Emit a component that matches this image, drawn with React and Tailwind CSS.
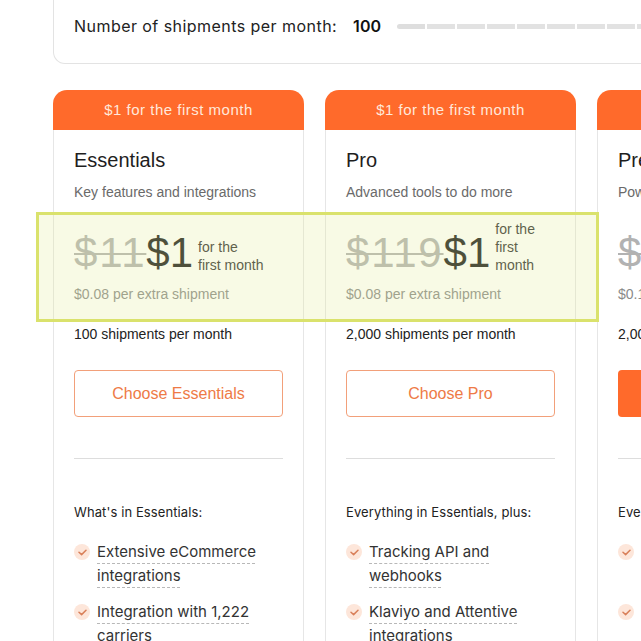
import React from 'react';

const plans = [
  {
    name: 'Essentials',
    tagline: 'Key features and integrations',
    oldPrice: '$11',
    extra: '$0.08 per extra shipment',
    volume: '100 shipments per month',
    cta: 'Choose Essentials',
    filled: false,
    intro: "What's in Essentials:",
    features: [
      ['Extensive eCommerce', 'integrations'],
      ['Integration with 1,222', 'carriers'],
    ],
  },
  {
    name: 'Pro',
    tagline: 'Advanced tools to do more',
    oldPrice: '$119',
    extra: '$0.08 per extra shipment',
    volume: '2,000 shipments per month',
    cta: 'Choose Pro',
    filled: false,
    intro: 'Everything in Essentials, plus:',
    features: [
      ['Tracking API and', 'webhooks'],
      ['Klaviyo and Attentive', 'integrations'],
    ],
  },
  {
    name: 'Premium',
    tagline: 'Powerful features for scale',
    oldPrice: '$349',
    extra: '$0.10 per extra shipment',
    volume: '2,000 shipments per month',
    cta: 'Choose Premium',
    filled: true,
    intro: 'Everything in Pro, plus:',
    features: [
      ['Custom shipping', 'rules'],
      ['Dedicated account', 'manager'],
      ['Priority support', 'line'],
    ],
  },
];

const sans = { fontFamily: '"Liberation Sans", Arial, sans-serif' };
const geo = { fontFamily: 'Inter, "Noto Sans", sans-serif' };

const Check = () => (
  <span className="w-4 h-4 rounded-full bg-[#fde6da] flex items-center justify-center shrink-0 mt-[4px]">
    <svg width="9" height="7" viewBox="0 0 9 7" fill="none">
      <path d="M1 3.2 L3.6 5.6 L8 1.2" stroke="#d9805a" strokeWidth="1.5" strokeLinecap="round" strokeLinejoin="round" />
    </svg>
  </span>
);

const PlanCard = ({ plan }) => (
  <div className="w-[251px] shrink-0">
    <div
      className="h-[40px] rounded-t-[14px] bg-[#ff6a2b] flex items-center justify-center text-[15px] tracking-[0.5px] text-[#ffe8da]"
      style={sans}
    >
      $1 for the first month
    </div>
    <div className="border-x border-[#e6e6e6] px-[20px] pt-[18px] pb-10">
      <div className="text-[20px] leading-6 text-[#1e1e1e]" style={sans}>{plan.name}</div>
      <div className="mt-[11px] text-[14px] leading-[18px] text-[#6a6a6a]" style={sans}>{plan.tagline}</div>

      {/* price row keeps a fixed height; a taller note grows upward */}
      <div className="mt-[31px] h-[42px] flex items-end" style={sans}>
        <span className="text-[42px] leading-none text-[#b2b2b2] line-through decoration-2 tracking-[1.8px] whitespace-nowrap">
          {plan.oldPrice}
        </span>
        <span className="text-[42px] leading-none text-[#1c1c1c] whitespace-nowrap">$1</span>
        <span className="ml-[5px] flex-1 min-w-0 text-[14px] leading-[18px] text-[#333]">
          for the
          <br />
          first month
        </span>
      </div>
      <div className="mt-[11px] text-[14px] leading-[18px] text-[#8a8a8a]" style={sans}>{plan.extra}</div>
      <div className="mt-[22px] text-[14px] leading-[18px] text-[#222]" style={sans}>{plan.volume}</div>

      <button
        className={
          plan.filled
            ? 'mt-[27px] w-full h-[47px] rounded-[4px] bg-[#ff6a2b] text-white text-[16px]'
            : 'mt-[27px] w-full h-[47px] rounded-[4px] border border-[#f2a07a] text-[#ee7a46] text-[16px] bg-white'
        }
        style={sans}
      >
        {plan.cta}
      </button>

      <div className="mt-[41px] h-px bg-[#dddddd]" />

      <div className="mt-[43px] text-[13px] tracking-[0.1px] leading-5 text-[#222]" style={geo}>{plan.intro}</div>

      <ul className="mt-[18px] flex flex-col gap-3" style={geo}>
        {plan.features.map((lines, i) => (
          <li key={i} className="flex gap-[7px] text-[15px] leading-6 text-[#333]">
            <Check />
            <span className="flex flex-col">
              {lines.map((l, j) => (
                <span
                  key={j}
                  className="underline decoration-dashed decoration-[#b8b8b8] decoration-1 underline-offset-[6px]"
                >
                  {l}
                </span>
              ))}
            </span>
          </li>
        ))}
      </ul>
    </div>
  </div>
);

export default function App() {
  const segments = Array.from({ length: 9 });
  return (
    <div className="w-[641px] h-[641px] overflow-hidden relative bg-white">
      {/* shipments slider card */}
      <div className="ml-[53px] w-[700px] h-[64px] border-x border-b border-[#e3e3e3] rounded-b-[12px] flex items-center pl-[20px]">
        <div className="flex items-center -mt-[12px]" style={geo}>
          <span className="text-[16px] tracking-[0.45px] text-[#222]">Number of shipments per month:</span>
          <span className="ml-[16px] text-[16px] font-semibold text-[#111]">100</span>
          <div className="ml-[16px] flex gap-[2px] mt-[2px]">
            {segments.map((_, i) => (
              <span
                key={i}
                className={
                  i === 0
                    ? 'w-[28px] h-[5px] bg-[#dedede] rounded-l-full'
                    : 'w-[28px] h-[5px] bg-[#e2e2e2]'
                }
              />
            ))}
          </div>
        </div>
      </div>

      {/* plan cards */}
      <div className="mt-[26px] pl-[53px] flex gap-[21px]">
        {plans.map((p) => (
          <PlanCard key={p.name} plan={p} />
        ))}
      </div>

      {/* price highlight overlay */}
      <div className="absolute left-[36px] top-[212px] w-[563px] h-[110px] border-[3px] border-[#dae26c] bg-[rgba(228,236,150,0.25)] pointer-events-none" />
    </div>
  );
}
